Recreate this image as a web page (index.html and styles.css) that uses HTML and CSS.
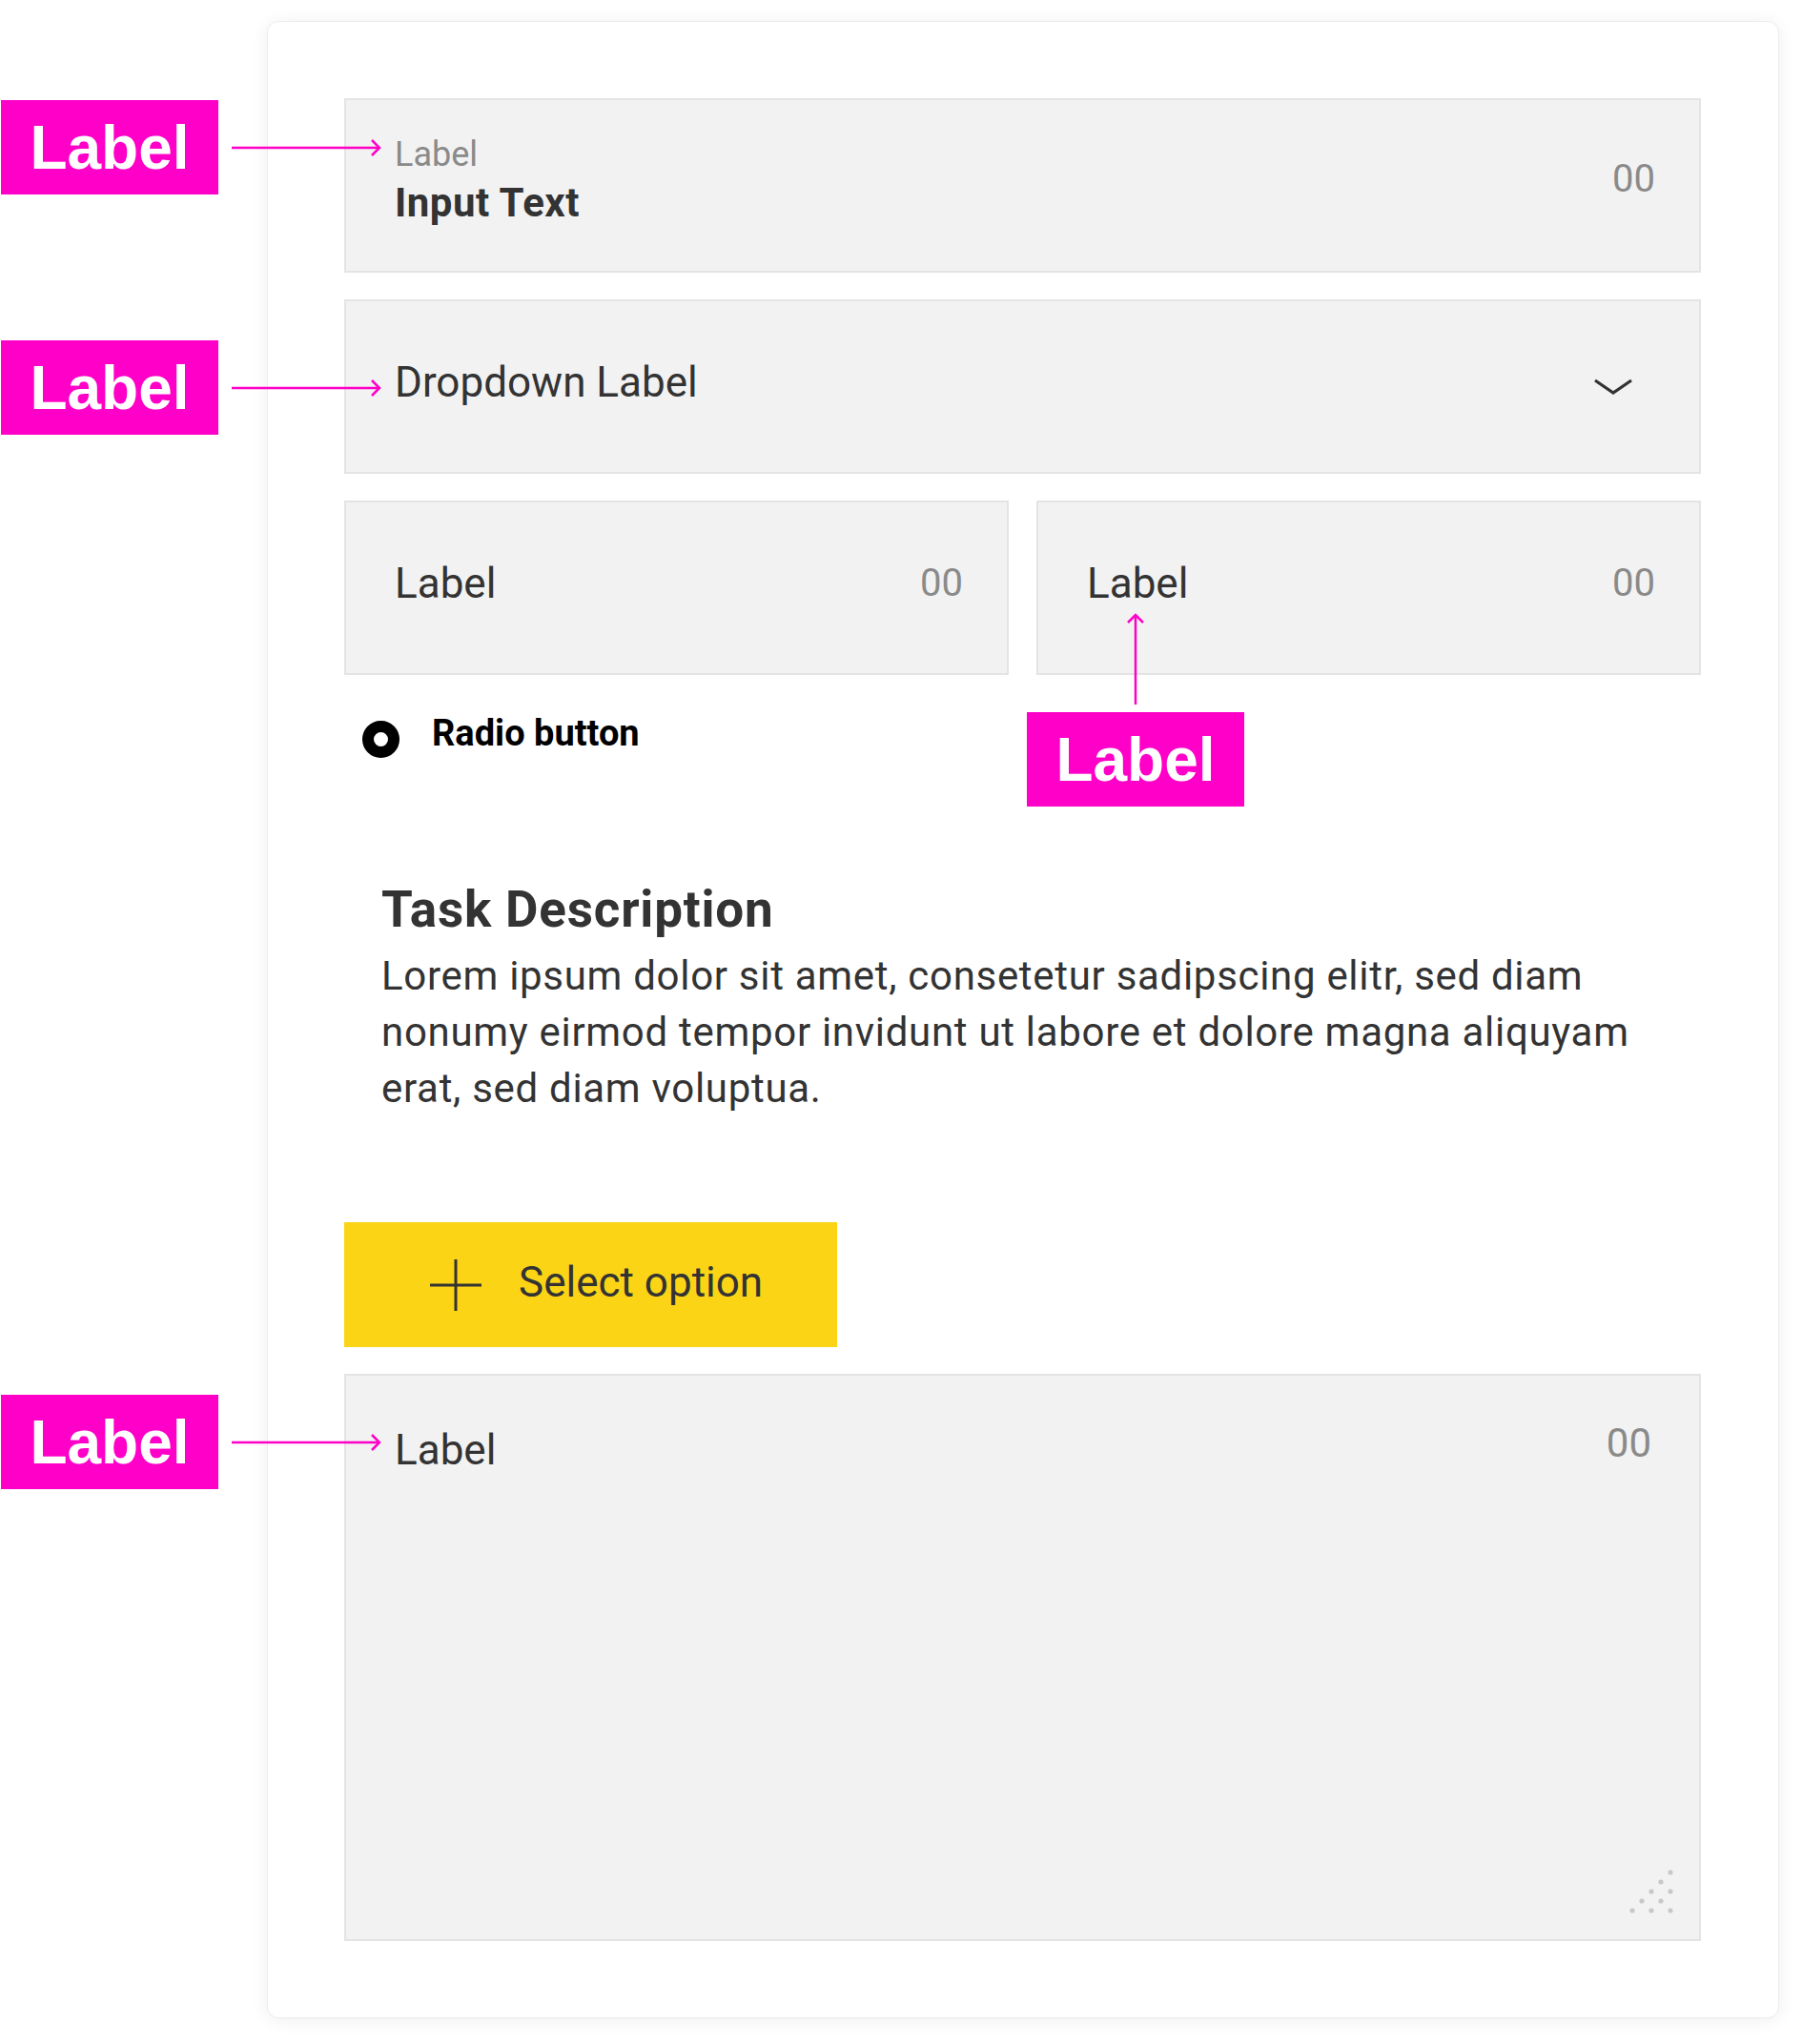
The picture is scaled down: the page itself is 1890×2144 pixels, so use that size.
FILE: index.html
```html
<!DOCTYPE html>
<html lang="en">
<head>
    <meta charset="UTF-8">
    <meta name="viewport" content="width=device-width, initial-scale=1.0">
    <title>Form Components</title>
    <link rel="stylesheet" href="styles.css">
</head>
<body>
    <div class="page">
        <div class="card">
            <div class="field field-stacked">
                <div class="field-content">
                    <div class="field-label">Label</div>
                    <div class="field-value">Input Text</div>
                </div>
                <div class="counter">00</div>
                <div class="note note-first">Label</div>
                <svg class="arrow arrow-first" width="160" height="24" viewBox="0 0 160 24">
                    <line x1="1" y1="12" x2="156" y2="12" />
                    <polyline points="148,4 156,12 148,20" />
                </svg>
            </div>

            <div class="field">
                <div class="field-text">Dropdown Label</div>
                <svg class="chevron" width="42" height="18" viewBox="0 0 42 18">
                    <polyline points="2,2 21,15 40,2" />
                </svg>
                <div class="note note-second">Label</div>
                <svg class="arrow arrow-second" width="160" height="24" viewBox="0 0 160 24">
                    <line x1="1" y1="12" x2="156" y2="12" />
                    <polyline points="148,4 156,12 148,20" />
                </svg>
            </div>

            <div class="field-row">
                <div class="field">
                    <div class="field-text">Label</div>
                    <div class="counter">00</div>
                </div>
                <div class="field">
                    <div class="field-text">Label</div>
                    <div class="counter">00</div>
                    <div class="note note-up">Label</div>
                    <svg class="arrow arrow-up" width="24" height="100" viewBox="0 0 24 100">
                        <line x1="12" y1="2" x2="12" y2="96" />
                        <polyline points="4,10 12,2 20,10" />
                    </svg>
                </div>
            </div>

            <div class="radio">
                <span class="radio-dot"></span>
                <span class="radio-text">Radio button</span>
            </div>

            <div class="task">
                <h2>Task Description</h2>
                <p>Lorem ipsum dolor sit amet, consetetur sadipscing elitr, sed diam nonumy eirmod tempor invidunt ut labore et dolore magna aliquyam erat, sed diam voluptua.</p>
            </div>

            <button class="select-btn">
                <svg width="56" height="56" viewBox="0 0 56 56">
                    <line x1="28" y1="1" x2="28" y2="55" />
                    <line x1="1" y1="28" x2="55" y2="28" />
                </svg>
                <span>Select option</span>
            </button>

            <div class="field textarea">
                <div class="field-text">Label</div>
                <div class="counter">00</div>
                <svg class="grip" width="48" height="48" viewBox="0 0 48 48">
                    <circle cx="44" cy="4" r="2.6" />
                    <circle cx="34" cy="14" r="2.6" />
                    <circle cx="24" cy="24" r="2.6" />
                    <circle cx="44" cy="24" r="2.6" />
                    <circle cx="14" cy="34" r="2.6" />
                    <circle cx="34" cy="34" r="2.6" />
                    <circle cx="4" cy="44" r="2.6" />
                    <circle cx="24" cy="44" r="2.6" />
                    <circle cx="44" cy="44" r="2.6" />
                </svg>
                <div class="note note-third">Label</div>
                <svg class="arrow arrow-third" width="160" height="24" viewBox="0 0 160 24">
                    <line x1="1" y1="12" x2="156" y2="12" />
                    <polyline points="148,4 156,12 148,20" />
                </svg>
            </div>
        </div>
    </div>
</body>
</html>
```

FILE: styles.css
```css
* {
    margin: 0;
    padding: 0;
    box-sizing: border-box;
}
html, body {
    width: 100%;
    background: white;
    font-family: Roboto, 'Liberation Sans', sans-serif;
    color: #333;
}
.page {
    padding: 22px 0 26px 280px;
}
.card {
    width: 1586px;
    background: white;
    border: 1px solid #ededed;
    border-radius: 12px;
    box-shadow: 0 2px 18px rgba(0, 0, 0, 0.07);
    padding: 80px 81px 80px 80px;
    display: flex;
    flex-direction: column;
}
.field {
    position: relative;
    height: 183px;
    background: #f2f2f2;
    border: 2px solid #e4e4e4;
    display: flex;
    align-items: center;
    justify-content: space-between;
    padding: 0 46px 10px 51px;
    margin-bottom: 28px;
}
.field-stacked {
    padding-bottom: 14px;
}
.field-label {
    font-size: 36px;
    line-height: 50px;
    color: #8a8a8a;
}
.field-value {
    font-size: 42px;
    line-height: 52px;
    font-weight: bold;
    color: #333;
    letter-spacing: 0.5px;
}
.field-text {
    font-size: 44px;
    color: #333;
}
.counter {
    font-size: 40px;
    color: #8a8a8a;
}
.chevron {
    margin: 10px 23px 0 0;
    fill: none;
    stroke: #333;
    stroke-width: 3.2;
}
.field-row {
    display: flex;
    gap: 29px;
}
.field-row .field {
    flex: 1;
}

/* annotations */
.note {
    position: absolute;
    width: 228px;
    height: 99px;
    background: #ff00c8;
    color: white;
    font-family: 'Liberation Sans', Arial, sans-serif;
    font-weight: bold;
    font-size: 64px;
    display: flex;
    align-items: center;
    justify-content: center;
}
.note-first { left: -362px; top: 0; }
.note-second { left: -362px; top: 41px; }
.note-third { left: -362px; top: 20px; }
.note-up { left: -12px; top: 220px; }
.arrow {
    position: absolute;
    fill: none;
    stroke: #ff00c8;
    stroke-width: 2.5;
    overflow: visible;
}
.arrow-first { left: -121px; top: 38px; }
.arrow-second { left: -121px; top: 79px; }
.arrow-third { left: -121px; top: 58px; }
.arrow-up { left: 90px; top: 116px; }

.radio {
    display: flex;
    align-items: center;
    gap: 34px;
    padding: 11px 0 0 19px;
}
.radio-dot {
    width: 39px;
    height: 39px;
    border-radius: 50%;
    border: 12px solid #000;
    background: white;
}
.radio-text {
    font-size: 38px;
    font-weight: bold;
    color: #000;
    margin-bottom: 13px;
}
.task {
    padding: 118px 40px 0 39px;
}
.task h2 {
    font-size: 53px;
    line-height: 64px;
    font-weight: bold;
    color: #333;
    letter-spacing: 0.8px;
}
.task p {
    margin-top: 8px;
    font-size: 42px;
    line-height: 59px;
    color: #333;
    letter-spacing: 0.7px;
}
.select-btn {
    margin-top: 111px;
    margin-bottom: 28px;
    width: 517px;
    height: 131px;
    background: #fcd416;
    border: none;
    display: flex;
    align-items: center;
    gap: 38px;
    padding-left: 89px;
    font-family: inherit;
    font-size: 44px;
    color: #333;
}
.select-btn span {
    margin-bottom: 6px;
}
.select-btn svg {
    stroke: #333;
    stroke-width: 3;
}
.textarea {
    height: 595px;
    align-items: flex-start;
    padding-top: 52px;
    margin-bottom: 0;
}
.textarea .counter {
    font-size: 42px;
    margin-top: -6px;
    margin-right: 4px;
}
.grip {
    position: absolute;
    right: 26px;
    bottom: 26px;
    fill: #c8c8c8;
}
```
